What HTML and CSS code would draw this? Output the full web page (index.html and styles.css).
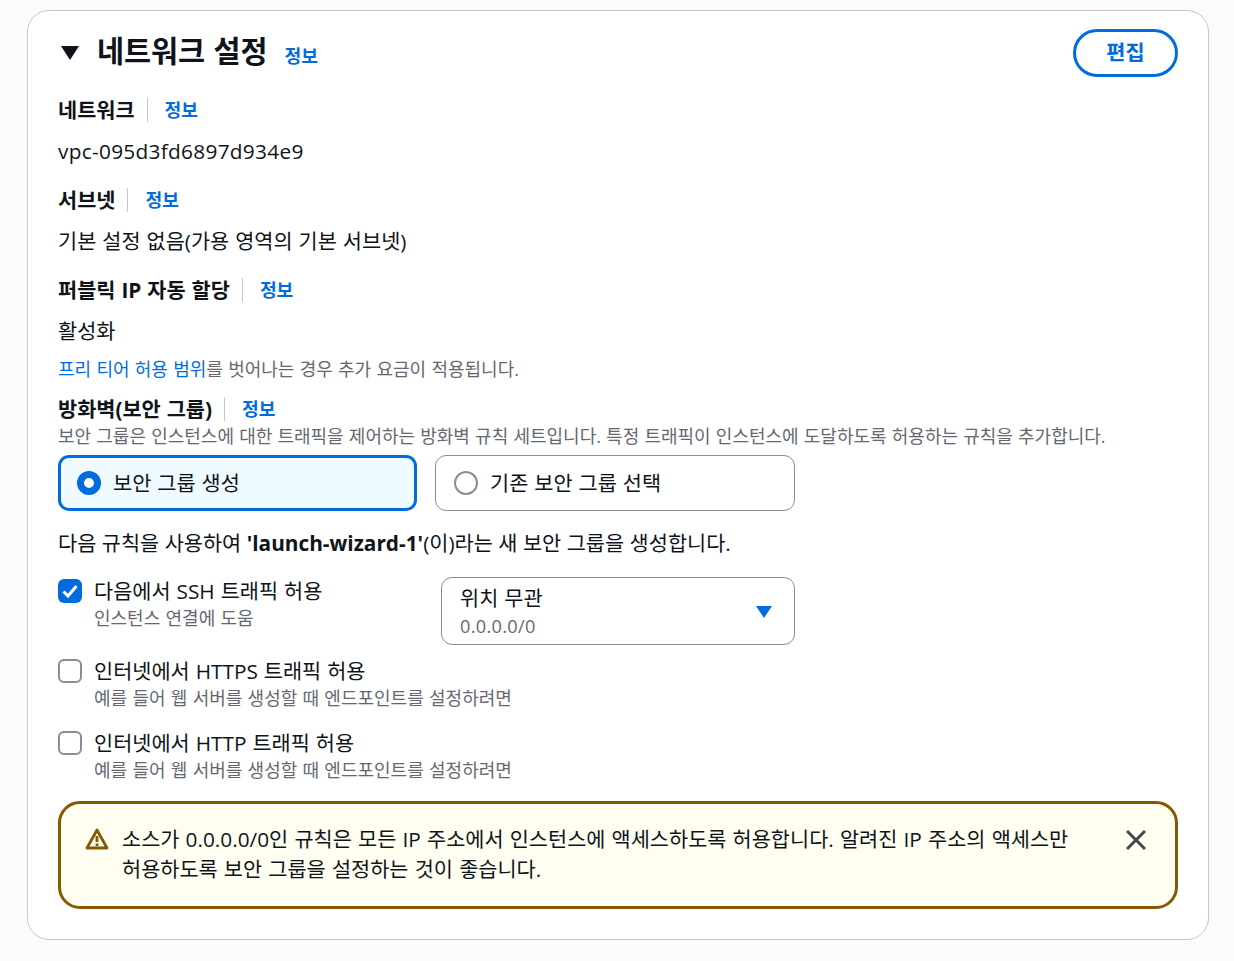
FILE: index.html
```html
<!DOCTYPE html>
<html lang="ko">
<head>
<meta charset="utf-8">
<title>네트워크 설정</title>
<link rel="stylesheet" href="styles.css">
</head>
<body>
<section class="card">
  <header class="card-head">
    <div class="title-wrap">
      <svg class="caret" viewBox="0 0 20 16"><path d="M1 1h18L10 15z"/></svg>
      <h2 class="title">네트워크 설정</h2>
      <a class="info info-title">정보</a>
    </div>
    <button class="edit">편집</button>
  </header>

  <div class="field f-network">
    <div class="label-row"><span class="label">네트워크</span><a class="info">정보</a></div>
    <div class="value value-id">vpc-095d3fd6897d934e9</div>
  </div>
  <div class="field">
    <div class="label-row"><span class="label">서브넷</span><a class="info">정보</a></div>
    <div class="value">기본 설정 없음(가용 영역의 기본 서브넷)</div>
  </div>
  <div class="field field-last">
    <div class="label-row"><span class="label">퍼블릭 IP 자동 할당</span><a class="info">정보</a></div>
    <div class="value">활성화</div>
  </div>
  <p class="free-tier"><a class="plain-link">프리 티어 허용 범위</a>를 벗어나는 경우 추가 요금이 적용됩니다.</p>

  <div class="label-row sg-label"><span class="label">방화벽(보안 그룹)</span><a class="info">정보</a></div>
  <p class="desc">보안 그룹은 인스턴스에 대한 트래픽을 제어하는 방화벽 규칙 세트입니다. 특정 트래픽이 인스턴스에 도달하도록 허용하는 규칙을 추가합니다.</p>

  <div class="tiles">
    <div class="tile tile-on"><span class="radio radio-on"></span><span>보안 그룹 생성</span></div>
    <div class="tile"><span class="radio"></span><span>기존 보안 그룹 선택</span></div>
  </div>

  <p class="rule-intro">다음 규칙을 사용하여 <b>'launch-wizard-1'</b>(이)라는 새 보안 그룹을 생성합니다.</p>

  <div class="ssh-row">
    <div class="check-row">
      <span class="check check-on"><svg viewBox="0 0 24 24"><path d="M5.5 12.5l4.5 4.5 8.5-10"/></svg></span>
      <div><div class="check-label">다음에서 SSH 트래픽 허용</div><div class="check-sub">인스턴스 연결에 도움</div></div>
    </div>
    <div class="select">
      <div><div class="select-main">위치 무관</div><div class="select-sub">0.0.0.0/0</div></div>
      <svg class="select-caret" viewBox="0 0 16 12"><path d="M0 0h16L8 12z"/></svg>
    </div>
  </div>

  <div class="check-row check-https">
    <span class="check"></span>
    <div><div class="check-label">인터넷에서 HTTPS 트래픽 허용</div><div class="check-sub">예를 들어 웹 서버를 생성할 때 엔드포인트를 설정하려면</div></div>
  </div>
  <div class="check-row check-http">
    <span class="check"></span>
    <div><div class="check-label">인터넷에서 HTTP 트래픽 허용</div><div class="check-sub">예를 들어 웹 서버를 생성할 때 엔드포인트를 설정하려면</div></div>
  </div>

  <div class="alert">
    <svg class="alert-icon" viewBox="0 0 24 22"><path class="tri" d="M12 2L2 20h20z"/><path class="mark" d="M12 8v6M12 15.5v2.5"/></svg>
    <p class="alert-text">소스가 0.0.0.0/0인 규칙은 모든 IP 주소에서 인스턴스에 액세스하도록 허용합니다. 알려진 IP 주소의 액세스만 허용하도록 보안 그룹을 설정하는 것이 좋습니다.</p>
    <svg class="close" viewBox="0 0 20 20"><path d="M1 1l18 18M19 1L1 19"/></svg>
  </div>
</section>
</body>
</html>
```

FILE: styles.css
```css
* { box-sizing: border-box; }
html, body { margin: 0; height: 100%; }
body {
  background: #fbfbfb;
  color: #0f141a;
  font-family: "Open Sans", "Noto Sans CJK KR", sans-serif;
  font-size: 20.8px;
  line-height: 28px;
  word-spacing: .6px;
  padding: 10px 25px 0 27px;
}
p, h2 { margin: 0; }
a { color: #006ce0; }
.card {
  background: #fff;
  border: 1px solid #c6c6cd;
  border-radius: 22px;
  height: 930px;
  padding: 18px 30px 0 30px;
}
.card-head { display: flex; justify-content: space-between; align-items: flex-start; height: 67px; }
.title-wrap { display: flex; align-items: center; height: 44px; }
.caret { width: 20px; height: 16px; margin: 4px 17px 0 2px; fill: #0f141a; }
.title { font-size: 29.4px; line-height: 44px; font-weight: 700; }
.info { font-size: 18.2px; font-weight: 700; }
.info-title { margin: 9px 0 0 17px; }
.edit {
  width: 105px; height: 48px;
  border: 3px solid #006ce0; border-radius: 24px;
  background: #fff; color: #006ce0;
  font: 700 20.8px/28px "Open Sans", "Noto Sans CJK KR", sans-serif;
  padding: 0 0 2px;
}
.field { margin-bottom: 21px; }
.field-last { margin-bottom: 10px; }
.label-row { display: flex; align-items: center; height: 28px; }
.label { font-weight: 700; padding-right: 12px; border-right: 1px solid #c6c6cd; line-height: 24px; }
.label-row .info { margin-left: 17px; }
.value { margin-top: 13px; }
.value-id { letter-spacing: .3px; }
.free-tier { font-size: 18px; line-height: 28px; color: #656871; }
.plain-link { color: #006ce0; }
.sg-label { margin-top: 12px; }
.desc { font-size: 18px; line-height: 24px; color: #656871; margin-top: 1px; white-space: nowrap; word-spacing: .5px; }
.tiles { display: flex; gap: 18px; margin-top: 7px; }
.tile {
  width: 360px; height: 56px;
  border: 1px solid #8c8c94; border-radius: 11px;
  display: flex; align-items: center; gap: 12px;
  padding: 0 18px;
}
.tile-on { width: 359px; background: #f0fbff; border: 3px solid #006ce0; padding: 0 16px; }
.radio { width: 24px; height: 24px; border-radius: 50%; border: 2px solid #8c8c94; background: #fff; flex: none; }
.radio-on { border: 7px solid #006ce0; }
.rule-intro { margin-top: 18px; word-spacing: .1px; }
.ssh-row { display: flex; justify-content: space-between; margin-top: 20px; width: 737px; }
.check-row { display: flex; gap: 12px; }
.check {
  width: 24px; height: 24px; border-radius: 6px; margin-top: 2px;
  border: 2px solid #8c8c94; background: #fff; flex: none; display: block;
}
.check-on { background: #006ce0; border: 0; }
.check-on svg { display: block; width: 24px; height: 24px; fill: none; stroke: #fff; stroke-width: 3; }
.check-label { line-height: 28px; }
.check-sub { font-size: 18px; line-height: 26px; color: #656871; }
.select {
  width: 354px; height: 68px;
  border: 1px solid #8c8c94; border-radius: 11px;
  display: flex; justify-content: space-between; align-items: center;
  padding: 1px 22px 0 18px;
}
.select-main { line-height: 28px; }
.select-sub { line-height: 28px; font-size: 18.2px; letter-spacing: .3px; color: #656871; }
.select-caret { width: 16px; height: 12px; fill: #006ce0; }
.check-https { margin-top: 12px; }
.check-http { margin-top: 18px; }
.alert {
  display: flex; align-items: flex-start;
  width: 1120px; height: 108px; margin-top: 18px;
  background: #fffef0; border: 3px solid #855900; border-radius: 22px;
  padding: 20px 29px 0 24px;
}
.alert-icon { width: 24px; height: 22px; flex: none; margin-top: 4px; }
.tri { fill: none; stroke: #855900; stroke-width: 2.8; stroke-linejoin: round; }
.mark { fill: none; stroke: #855900; stroke-width: 2.8; }
.alert-text { margin-left: 13px; width: 955px; line-height: 30px; word-spacing: .8px; }
.close { width: 20px; height: 20px; flex: none; margin: 6px 0 0 auto; fill: none; stroke: #424650; stroke-width: 3; }
```
